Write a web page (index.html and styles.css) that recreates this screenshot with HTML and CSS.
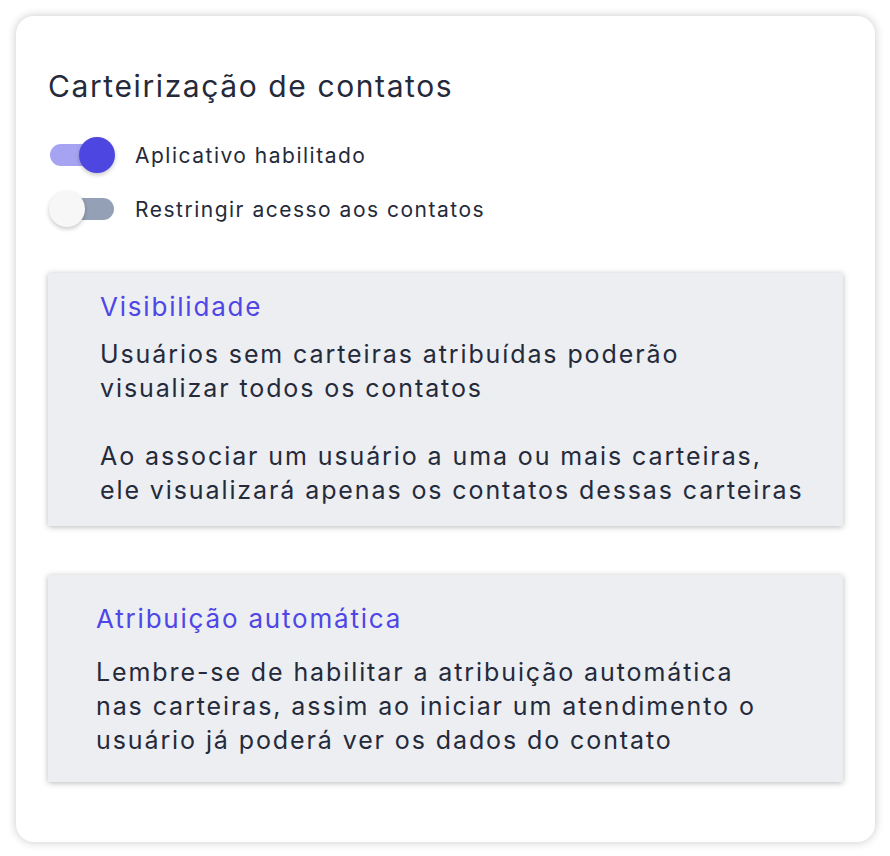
FILE: index.html
```html
<!DOCTYPE html>
<html lang="pt-BR">
<head>
    <meta charset="UTF-8">
    <meta name="viewport" content="width=device-width, initial-scale=1.0">
    <title>Carteirização de contatos</title>
    <link rel="stylesheet" href="styles.css">
</head>
<body>
    <div class="settings-card">
        <div class="title">Carteirização de contatos</div>

        <div class="toggles">
            <label class="toggle-row">
                <span class="switch on"><span class="knob"></span></span>
                <span class="toggle-label">Aplicativo habilitado</span>
            </label>
            <label class="toggle-row">
                <span class="switch"><span class="knob"></span></span>
                <span class="toggle-label">Restringir acesso aos contatos</span>
            </label>
        </div>

        <div class="info-box visibility">
            <div class="info-title">Visibilidade</div>
            <p class="info-text">
                Usuários sem carteiras atribuídas poderão<br>
                visualizar todos os contatos
            </p>
            <p class="info-text">
                Ao associar um usuário a uma ou mais carteiras,<br>
                ele visualizará apenas os contatos dessas carteiras
            </p>
        </div>

        <div class="info-box auto">
            <div class="info-title">Atribuição automática</div>
            <p class="info-text">
                Lembre-se de habilitar a atribuição automática<br>
                nas carteiras, assim ao iniciar um atendimento o<br>
                usuário já poderá ver os dados do contato
            </p>
        </div>
    </div>
</body>
</html>
```

FILE: styles.css
```css
/* Global Styles */
body {
    margin: 0;
    padding: 16px;
    background: #fff;
    font-family: 'Inter', 'Noto Sans', sans-serif;
    color: #252a3b;
}

.settings-card {
    width: 859px;
    height: 826px;
    box-sizing: border-box;
    padding: 52px 32px 0 32px;
    background: #fff;
    border-radius: 18px;
    box-shadow: 0 0 10px rgba(0, 0, 0, 0.22);
}

.title {
    font-size: 30px;
    line-height: 36px;
    font-weight: 400;
    letter-spacing: 1.6px;
}

.toggles {
    display: flex;
    flex-direction: column;
    gap: 18px;
    margin-top: 33px;
}

.toggle-row {
    display: flex;
    align-items: center;
    height: 36px;
}

.switch {
    position: relative;
    width: 64px;
    height: 22px;
    margin-left: 2px;
    border-radius: 11px;
    background: #94a0b5;
}

.switch.on {
    background: #a6a4f2;
}

.knob {
    position: absolute;
    top: -7px;
    left: -1px;
    width: 36px;
    height: 36px;
    border-radius: 50%;
    background: #f7f7f8;
    box-shadow: 0 2px 4px rgba(0, 0, 0, 0.22);
}

.switch.on .knob {
    left: auto;
    right: -1px;
    background: #4d46e0;
}

.toggle-label {
    margin-left: 21px;
    font-size: 21px;
    letter-spacing: 1.5px;
}

.info-box {
    background: #eceef2;
    box-shadow: 0 1px 6px rgba(0, 0, 0, 0.28);
}

.visibility {
    margin-top: 46px;
    padding: 17px 20px 19px 52px;
}

.auto {
    margin-top: 49px;
    padding: 27px 20px 25px 48px;
}

.info-title {
    font-size: 26px;
    line-height: 34px;
    color: #4f46e5;
    letter-spacing: 1.8px;
}

.info-text {
    margin: 0;
    font-size: 25px;
    line-height: 34px;
    letter-spacing: 1.9px;
}

.visibility .info-title {
    margin-bottom: 13px;
}

.visibility .info-text + .info-text {
    margin-top: 34px;
}

.auto .info-title {
    margin-bottom: 19px;
}
```
